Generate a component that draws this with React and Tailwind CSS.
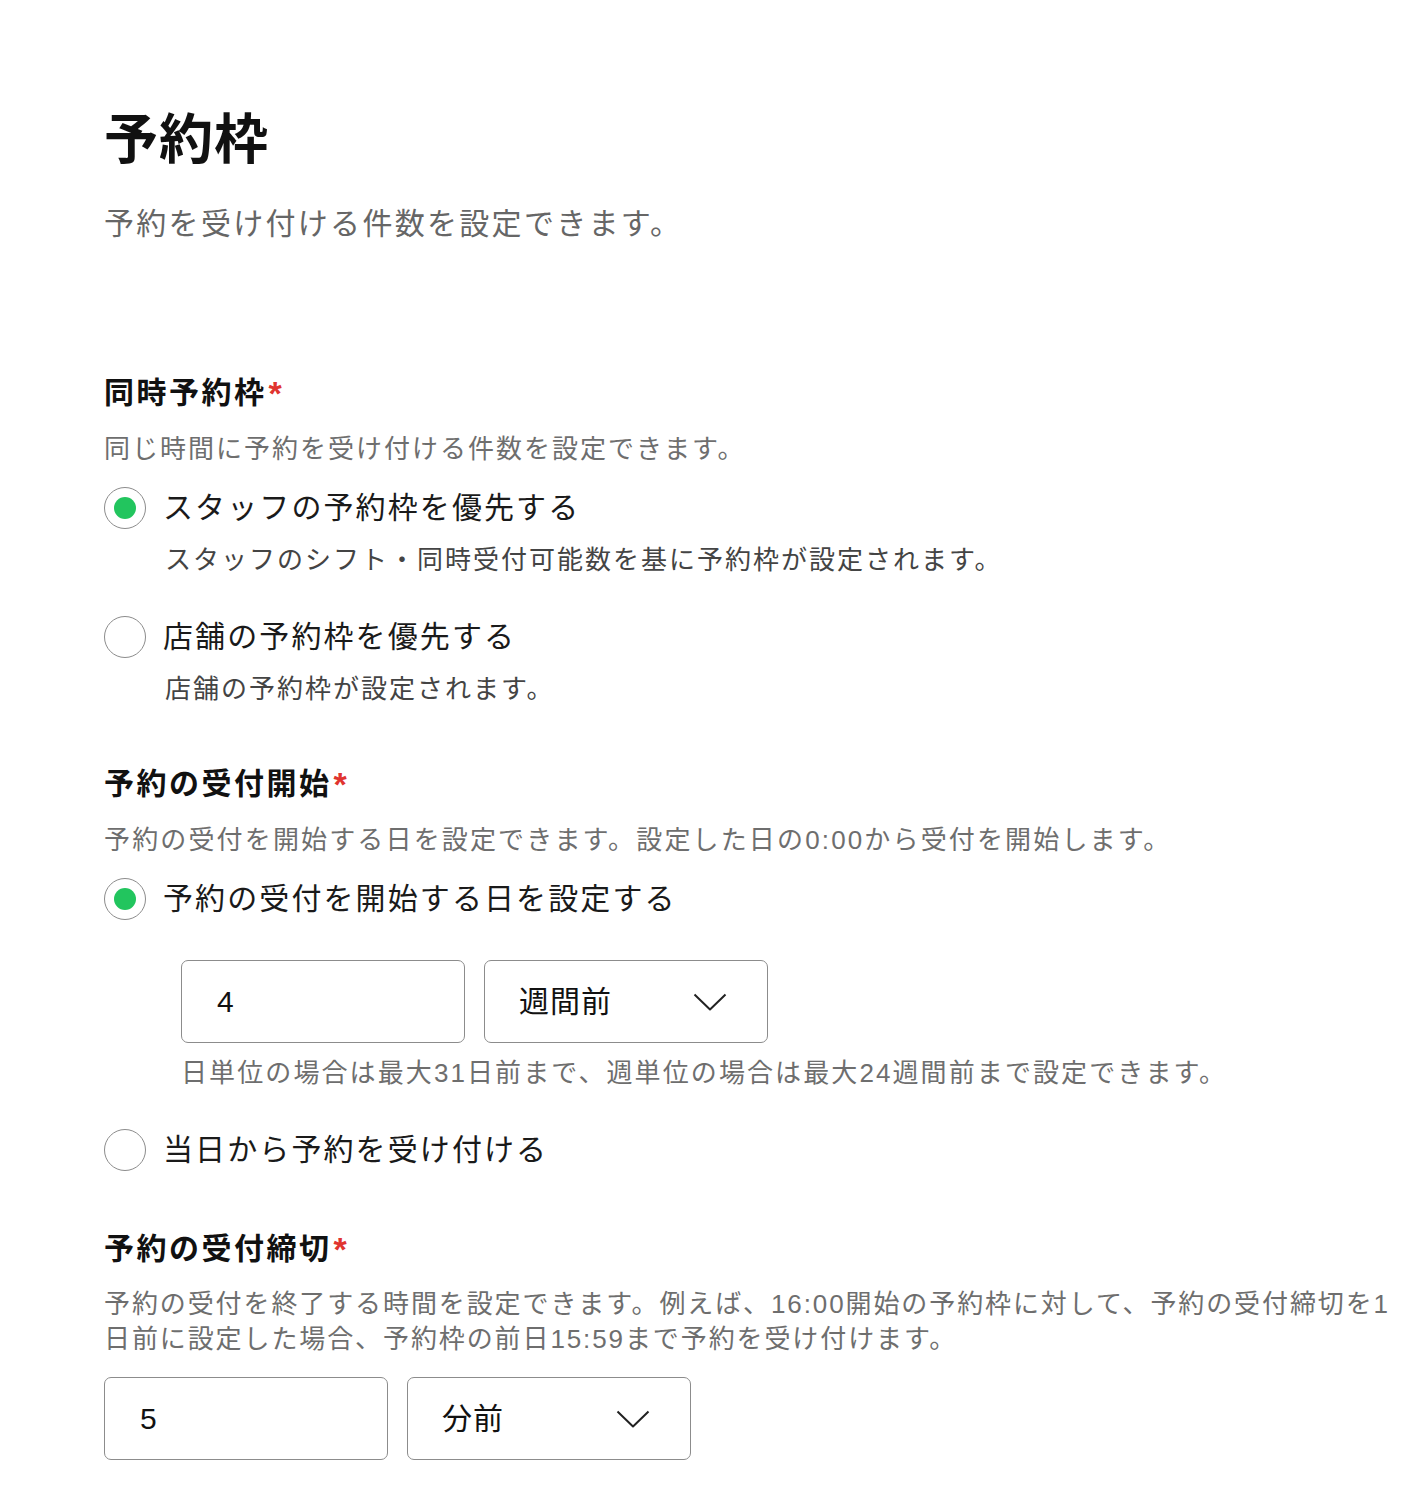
import { useState } from "react";

const font = {
  fontFamily: '"Liberation Sans", "Noto Sans CJK JP", sans-serif',
};

function Radio({ checked, onClick, label }) {
  return (
    <button type="button" onClick={onClick} className="flex items-center gap-[17px] h-[44px] text-left">
      <span className="w-[42px] h-[42px] rounded-full border-[1.5px] border-[#8c8c8c] flex items-center justify-center shrink-0 bg-white">
        {checked && <span className="w-[22px] h-[22px] rounded-full bg-[#22c55e]" />}
      </span>
      <span className="text-[30px] leading-[44px] tracking-[2.1px] text-[#1a1a1a]">{label}</span>
    </button>
  );
}

function Label({ children }) {
  return (
    <div className="flex items-start h-[40px]">
      <span className="text-[30px] leading-[40px] font-bold tracking-[2.5px] text-[#111]">{children}</span>
      <span className="text-[34px] leading-[34px] font-bold text-[#e0342f] ml-[2px] mt-[3px]">*</span>
    </div>
  );
}

function NumberSelect({ value, unit }) {
  return (
    <div className="flex gap-[19px]">
      <div className="w-[284px] h-[83px] border-[1.5px] border-[#8c8c8c] rounded-[7px] flex items-center pl-[35px] text-[30px] text-[#111]">
        {value}
      </div>
      <div className="w-[284px] h-[83px] border-[1.5px] border-[#8c8c8c] rounded-[7px] flex items-center justify-between pl-[34px] pr-[40px] text-[30px] text-[#111]">
        <span className="tracking-[1px]">{unit}</span>
        <svg width="34" height="18" viewBox="0 0 34 18" fill="none">
          <path d="M1.5 1.5 L17 16.5 L32.5 1.5" stroke="#222" strokeWidth="2" strokeLinejoin="round" />
        </svg>
      </div>
    </div>
  );
}

export default function App() {
  const [slot, setSlot] = useState("staff");
  const [start, setStart] = useState("date");

  return (
    <div style={font} className="min-h-screen bg-white pl-[104px] pr-[20px] pt-[108px] pb-[36px]">
      <h1 className="text-[54px] leading-[64px] font-bold tracking-[1px] text-[#111]">予約枠</h1>
      <p className="mt-[32px] text-[30px] leading-[40px] tracking-[2.3px] text-[#666]">
        予約を受け付ける件数を設定できます。
      </p>

      {/* 同時予約枠 */}
      <section className="mt-[129px]">
        <Label>同時予約枠</Label>
        <p className="mt-[18px] text-[26px] leading-[36px] tracking-[2px] text-[#6e6e6e]">
          同じ時間に予約を受け付ける件数を設定できます。
        </p>
        <div className="mt-[19px]">
          <Radio checked={slot === "staff"} onClick={() => setSlot("staff")} label="スタッフの予約枠を優先する" />
          <p className="mt-[12px] pl-[61px] text-[26px] leading-[36px] tracking-[2px] text-[#444]">
            スタッフのシフト・同時受付可能数を基に予約枠が設定されます。
          </p>
        </div>
        <div className="mt-[37px]">
          <Radio checked={slot === "store"} onClick={() => setSlot("store")} label="店舗の予約枠を優先する" />
          <p className="mt-[12px] pl-[61px] text-[26px] leading-[36px] tracking-[2px] text-[#444]">
            店舗の予約枠が設定されます。
          </p>
        </div>
      </section>

      {/* 予約の受付開始 */}
      <section className="mt-[57px]">
        <Label>予約の受付開始</Label>
        <p className="mt-[18px] text-[26px] leading-[36px] tracking-[2.15px] text-[#6e6e6e]">
          予約の受付を開始する日を設定できます。設定した日の0:00から受付を開始します。
        </p>
        <div className="mt-[19px]">
          <Radio checked={start === "date"} onClick={() => setStart("date")} label="予約の受付を開始する日を設定する" />
          <div className="mt-[39px] pl-[77px]">
            <NumberSelect value="4" unit="週間前" />
            <p className="mt-[12px] text-[26px] leading-[36px] tracking-[2.1px] text-[#6e6e6e]">
              日単位の場合は最大31日前まで、週単位の場合は最大24週間前まで設定できます。
            </p>
          </div>
        </div>
        <div className="mt-[37px]">
          <Radio checked={start === "today"} onClick={() => setStart("today")} label="当日から予約を受け付ける" />
        </div>
      </section>

      {/* 予約の受付締切 */}
      <section className="mt-[57px]">
        <Label>予約の受付締切</Label>
        <p className="mt-[18px] text-[26px] leading-[35px] tracking-[1.9px] text-[#6e6e6e] whitespace-nowrap">
          予約の受付を終了する時間を設定できます。例えば、16:00開始の予約枠に対して、予約の受付締切を1
          <br />
          日前に設定した場合、予約枠の前日15:59まで予約を受け付けます。
        </p>
        <div className="mt-[20px]">
          <NumberSelect value="5" unit="分前" />
        </div>
      </section>
    </div>
  );
}
